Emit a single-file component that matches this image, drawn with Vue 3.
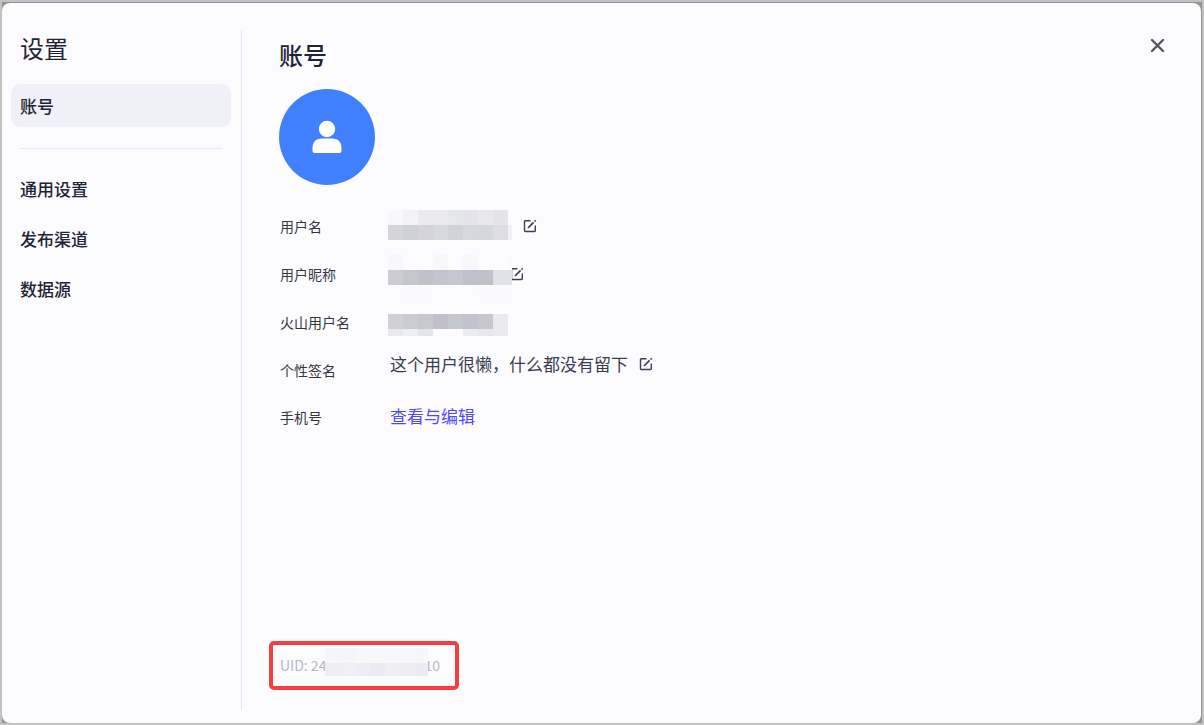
<script setup>
const menu = ['通用设置', '发布渠道', '数据源']

const rowOf = (y, h, colors, x0 = 0) =>
  colors.map((fill, i) => ({ x: x0 + i * 15, y, w: 15, h, fill }))

const nameMask = {
  w: 124,
  h: 30,
  cells: [
    ...rowOf(0, 15, ['#f8f8fa', '#f3f2f7', '#ebebef', '#ebebef', '#e5e7eb', '#e3e5ea', '#e8e8ed', '#e4e5e9']),
    ...rowOf(15, 15, ['#d5d6dc', '#d0d1d7', '#d4d4da', '#d8d9df', '#d2d3d9', '#d7d8de', '#d6d7dd', '#dddde3']),
    { x: 120, y: 15, w: 4, h: 15, fill: '#f1f1f5' },
  ],
}
const nickMask = {
  w: 124,
  h: 45,
  cells: [
    ...rowOf(0, 15, ['#f8f8fa', '#fcfcfe', '#fcfcfe', '#f8f8fa', '#fcfcfe', '#f8f8fa', '#fcfcfe', '#fcfcfe']),
    ...rowOf(15, 15, ['#cbccd4', '#c6c7cc', '#c0c1cb', '#c2c5cf', '#c6c7d1', '#bfc2cc', '#c0c1ca', '#e1e2e7']),
    { x: 120, y: 0, w: 4, h: 15, fill: '#fafafc' },
    { x: 120, y: 15, w: 4, h: 15, fill: '#e1e2e7' },
    ...rowOf(30, 15, ['#fcfcfe', '#fbfbfd', '#fbfbfd', '#fcfcfe', '#fcfcfe', '#fcfcfe', '#fbfbfd', '#fbfbfd']),
  ],
}
const volcMask = {
  w: 120,
  h: 22,
  cells: [
    ...rowOf(0, 15, ['#d0d1d6', '#cbccd2', '#c8c9d0', '#bfc0ca', '#c6c8d0', '#c2c3ce', '#c6c7d0', '#e9eaee']),
    ...rowOf(15, 7, ['#e9eaed', '#eeeff2', '#e4e5ea', '#fbfbfd', '#fbfbfd', '#ebecf0', '#e7e7ed', '#e9eaee']),
  ],
}
const uidMask = {
  w: 103,
  h: 28,
  cells: [
    ...rowOf(0, 15, ['#f7f7fa', '#f6f6f9', '#f8f8fb', '#f8f8fb', '#f8f8fb', '#f8f8fb', '#f7f7fa']),
    ...rowOf(15, 13, ['#eeeef3', '#efeff4', '#edeef3', '#ebebf1', '#eeeef3', '#ececf1', '#ebebf1']),
  ],
}

const fields = [
  { key: 'name', label: '用户名', mask: nameMask, edit: true },
  { key: 'nick', label: '用户昵称', mask: nickMask, edit: true },
  { key: 'volc', label: '火山用户名', mask: volcMask },
  { key: 'sign', label: '个性签名', text: '这个用户很懒，什么都没有留下', edit: true },
  { key: 'phone', label: '手机号', link: '查看与编辑' },
]
</script>

<template>
  <div class="backdrop">
    <div class="dialog" role="dialog" aria-label="设置">
      <aside class="side">
        <h1 class="side-title">设置</h1>
        <nav class="menu">
          <button type="button" class="item active">账号</button>
          <hr class="sep" />
          <button v-for="m in menu" :key="m" type="button" class="item">{{ m }}</button>
        </nav>
      </aside>

      <main class="main">
        <button type="button" class="close" aria-label="关闭">
          <svg width="15" height="15" viewBox="0 0 15 15">
            <path d="M2 2L13 13M13 2L2 13" fill="none" stroke="#55575f" stroke-width="2.4" stroke-linecap="round" />
          </svg>
        </button>
        <h2 class="title">账号</h2>
        <div class="avatar">
          <svg width="30" height="34" viewBox="0 0 30 34" fill="#fff">
            <circle cx="15" cy="9" r="8.2" />
            <path d="M.5 28C.5 21.500 4.500 18.500 10 18.500H20C25.500 18.500 29.500 21.500 29.500 28V31Q29.500 33 27.500 33H2.500Q.5 33 .5 31Z" />
          </svg>
        </div>

        <dl class="fields">
          <div v-for="f in fields" :key="f.key" class="field" :class="f.key">
            <dt class="label">{{ f.label }}</dt>
            <dd class="value">
              <svg v-if="f.mask" class="mask" :width="f.mask.w" :height="f.mask.h" shape-rendering="crispEdges">
                <rect v-for="(c, i) in f.mask.cells" :key="i" :x="c.x" :y="c.y" :width="c.w" :height="c.h" :fill="c.fill" />
              </svg>
              <span v-if="f.text" class="text">{{ f.text }}</span>
              <a v-if="f.link" class="link" href="#">{{ f.link }}</a>
              <button v-if="f.edit" type="button" class="edit" :aria-label="'编辑' + f.label">
                <svg width="14" height="14" viewBox="0 0 14 14" fill="none" stroke="#3d4053" stroke-width="1.400">
                  <path d="M7.500 1.700H2.200Q1.500 1.700 1.500 2.400V11.800Q1.500 12.500 2.200 12.500H11.600Q12.300 12.500 12.300 11.800V6.500" />
                  <path d="M5 9L10.600 3.400M11.500 2.500L12.700 1.300" stroke-width="1.700" />
                </svg>
              </button>
            </dd>
          </div>
        </dl>

        <footer class="uid">
          <span>UID: 24</span>
          <svg class="uid-mask" :width="uidMask.w" :height="uidMask.h" shape-rendering="crispEdges">
            <rect v-for="(c, i) in uidMask.cells" :key="i" :x="c.x" :y="c.y" :width="c.w" :height="c.h" :fill="c.fill" />
          </svg>
          <span class="tail">10</span>
        </footer>
      </main>
    </div>
  </div>
</template>

<style>
html,
body,
#app {
  height: 100%;
}
</style>

<style scoped>
.backdrop {
  box-sizing: border-box;
  min-height: 100%;
  display: flex;
  background: #929292;
  border: 2px solid #c2c2c2;
  padding: 1px 1px 0 0;
  font-family: "Noto Sans CJK SC", sans-serif;
  color: #1f2335;
}
.dialog {
  flex: 1;
  display: flex;
  background: #fcfcff;
  border-radius: 8px;
}
.side {
  box-sizing: border-box;
  width: 240px;
  flex: none;
  padding: 27px 11px 0 9px;
  background: linear-gradient(#e6e6eb, #e6e6eb) right 27px / 1px calc(100% - 40px) no-repeat;
}
.side-title {
  margin: 0 0 18px 9px;
  font-size: 24px;
  line-height: 36px;
  font-weight: 400;
}
.menu {
  display: flex;
  flex-direction: column;
}
.item {
  height: 43px;
  margin: 0 0 7px;
  padding: 0 9px;
  border: 0;
  border-radius: 9px;
  background: none;
  font: 500 17px/24px "Noto Sans CJK SC", sans-serif;
  color: #1f2335;
  text-align: left;
}
.item.active {
  margin-bottom: 21px;
  background: #f0f0f9;
}
.sep {
  width: calc(100% - 18px);
  height: 1px;
  margin: 0 auto 18px;
  border: 0;
  background: #e8e8ed;
}
.main {
  position: relative;
  flex: 1;
  display: flex;
  flex-direction: column;
  padding: 34px 36px 33px 37px;
}
.close {
  position: absolute;
  top: 35px;
  right: 36px;
  display: flex;
  padding: 0;
  border: 0;
  background: none;
}
.title {
  margin: 0 0 16px;
  font-size: 24px;
  line-height: 36px;
  font-weight: 500;
}
.avatar {
  width: 96px;
  height: 96px;
  border-radius: 50%;
  background: #4080ff;
  display: flex;
  align-items: center;
  justify-content: center;
}
.fields {
  margin: 17px 0 0;
}
.field {
  display: flex;
  align-items: center;
  height: 48px;
}
.field.sign,
.field.phone {
  height: 47px;
}
.label {
  box-sizing: border-box;
  width: 109px;
  padding-left: 1px;
  flex: none;
  font-size: 14px;
  line-height: 20px;
  color: #34363f;
}
.value {
  margin: 0;
  display: flex;
  align-items: center;
  font-size: 17px;
  line-height: 24px;
  color: #3a3d4d;
}
.mask {
  display: block;
}
.edit {
  display: flex;
  margin-left: 11px;
  padding: 0;
  border: 0;
  background: none;
}
.name .mask {
  margin-bottom: 2px;
}
.nick .mask {
  z-index: 1;
  margin-top: 6px;
}
.nick .edit {
  margin-left: -2px;
}
.volc .mask {
  margin-top: 6px;
}
.sign .value {
  padding: 0 0 12px 2px;
}
.sign .edit {
  margin-left: 11px;
}
.phone .value {
  padding: 0 0 2px 2px;
}
.link {
  color: #5147ff;
  text-decoration: none;
}
.uid {
  display: flex;
  align-items: center;
  align-self: flex-start;
  height: 41px;
  margin: auto 0 0 -10px;
  padding: 0 15px 0 7px;
  border: 4px solid #f53f3f;
  border-radius: 5px;
  font-size: 14px;
  line-height: 20px;
  color: #b6b6cd;
}
.uid span {
  padding-bottom: 2px;
}
.uid-mask {
  z-index: 1;
  margin: 0 -4px 7px -1px;
}
</style>
